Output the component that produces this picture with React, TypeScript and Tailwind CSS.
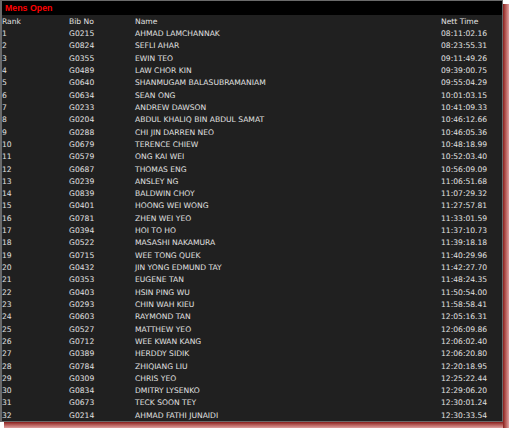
const rows: [string, string, string][] = [
  ['G0215', 'AHMAD LAMCHANNAK', '08:11:02.16'],
  ['G0824', 'SEFLI AHAR', '08:23:55.31'],
  ['G0355', 'EWIN TEO', '09:11:49.26'],
  ['G0489', 'LAW CHOR KIN', '09:39:00.75'],
  ['G0640', 'SHANMUGAM BALASUBRAMANIAM', '09:55:04.29'],
  ['G0634', 'SEAN ONG', '10:01:03.15'],
  ['G0233', 'ANDREW DAWSON', '10:41:09.33'],
  ['G0204', 'ABDUL KHALIQ BIN ABDUL SAMAT', '10:46:12.66'],
  ['G0288', 'CHI JIN DARREN NEO', '10:46:05.36'],
  ['G0679', 'TERENCE CHIEW', '10:48:18.99'],
  ['G0579', 'ONG KAI WEI', '10:52:03.40'],
  ['G0687', 'THOMAS ENG', '10:56:09.09'],
  ['G0239', 'ANSLEY NG', '11:06:51.68'],
  ['G0839', 'BALDWIN CHOY', '11:07:29.32'],
  ['G0401', 'HOONG WEI WONG', '11:27:57.81'],
  ['G0781', 'ZHEN WEI YEO', '11:33:01.59'],
  ['G0394', 'HOI TO HO', '11:37:10.73'],
  ['G0522', 'MASASHI NAKAMURA', '11:39:18.18'],
  ['G0715', 'WEE TONG QUEK', '11:40:29.96'],
  ['G0432', 'JIN YONG EDMUND TAY', '11:42:27.70'],
  ['G0353', 'EUGENE TAN', '11:48:24.35'],
  ['G0403', 'HSIN PING WU', '11:50:54.00'],
  ['G0293', 'CHIN WAH KIEU', '11:58:58.41'],
  ['G0603', 'RAYMOND TAN', '12:05:16.31'],
  ['G0527', 'MATTHEW YEO', '12:06:09.86'],
  ['G0712', 'WEE KWAN KANG', '12:06:02.40'],
  ['G0389', 'HERDDY SIDIK', '12:06:20.80'],
  ['G0784', 'ZHIQIANG LIU', '12:20:18.95'],
  ['G0309', 'CHRIS YEO', '12:25:22.44'],
  ['G0834', 'DMITRY LYSENKO', '12:29:06.20'],
  ['G0673', 'TECK SOON TEY', '12:30:01.24'],
  ['G0214', 'AHMAD FATHI JUNAIDI', '12:30:33.54'],
];

const cols = 'grid grid-cols-[67px_66px_306px_1fr] h-[12.32px] leading-[12.32px]';

export default function App() {
  return (
    <div className="relative w-[509px] h-[428px] bg-white overflow-hidden">
      {/* red drop shadow */}
      <div className="absolute left-[4px] top-[4px] w-[505px] h-[424px] bg-gradient-to-br from-[#7a1414] to-[#c86a6a]" />
      <div className="absolute left-[4px] bottom-0 w-[505px] h-[6px] bg-gradient-to-b from-[#8a1c1c] to-[#e0a0a0]" />
      <div className="absolute right-0 top-[4px] w-[6px] h-[424px] bg-gradient-to-r from-[#8a1c1c] to-[#e0a0a0]" />
      <div
        className="relative w-[503px] h-[422px] bg-[#202020] border-l-2 border-t border-r border-b border-[#6a6a6a] text-[#e0e0e0] text-[7.6px] overflow-hidden"
        style={{ fontFamily: '"DejaVu Sans", Verdana, sans-serif' }}
      >
        <div
          className="h-[14px] bg-black pl-[3px] text-[#ff0000] font-bold text-[8.8px] leading-[14px]"
          style={{ fontFamily: '"Liberation Sans", Arial, sans-serif' }}
        >
          Mens Open
        </div>
        <div className="pt-[0.8px]">
          <div className={cols}>
            <span>Rank</span>
            <span>Bib No</span>
            <span>Name</span>
            <span>Nett Time</span>
          </div>
          {rows.map(([bib, name, time], i) => (
            <div key={bib} className={cols}>
              <span>{i + 1}</span>
              <span>{bib}</span>
              <span className="whitespace-nowrap">{name}</span>
              <span>{time}</span>
            </div>
          ))}
        </div>
      </div>
    </div>
  );
}
